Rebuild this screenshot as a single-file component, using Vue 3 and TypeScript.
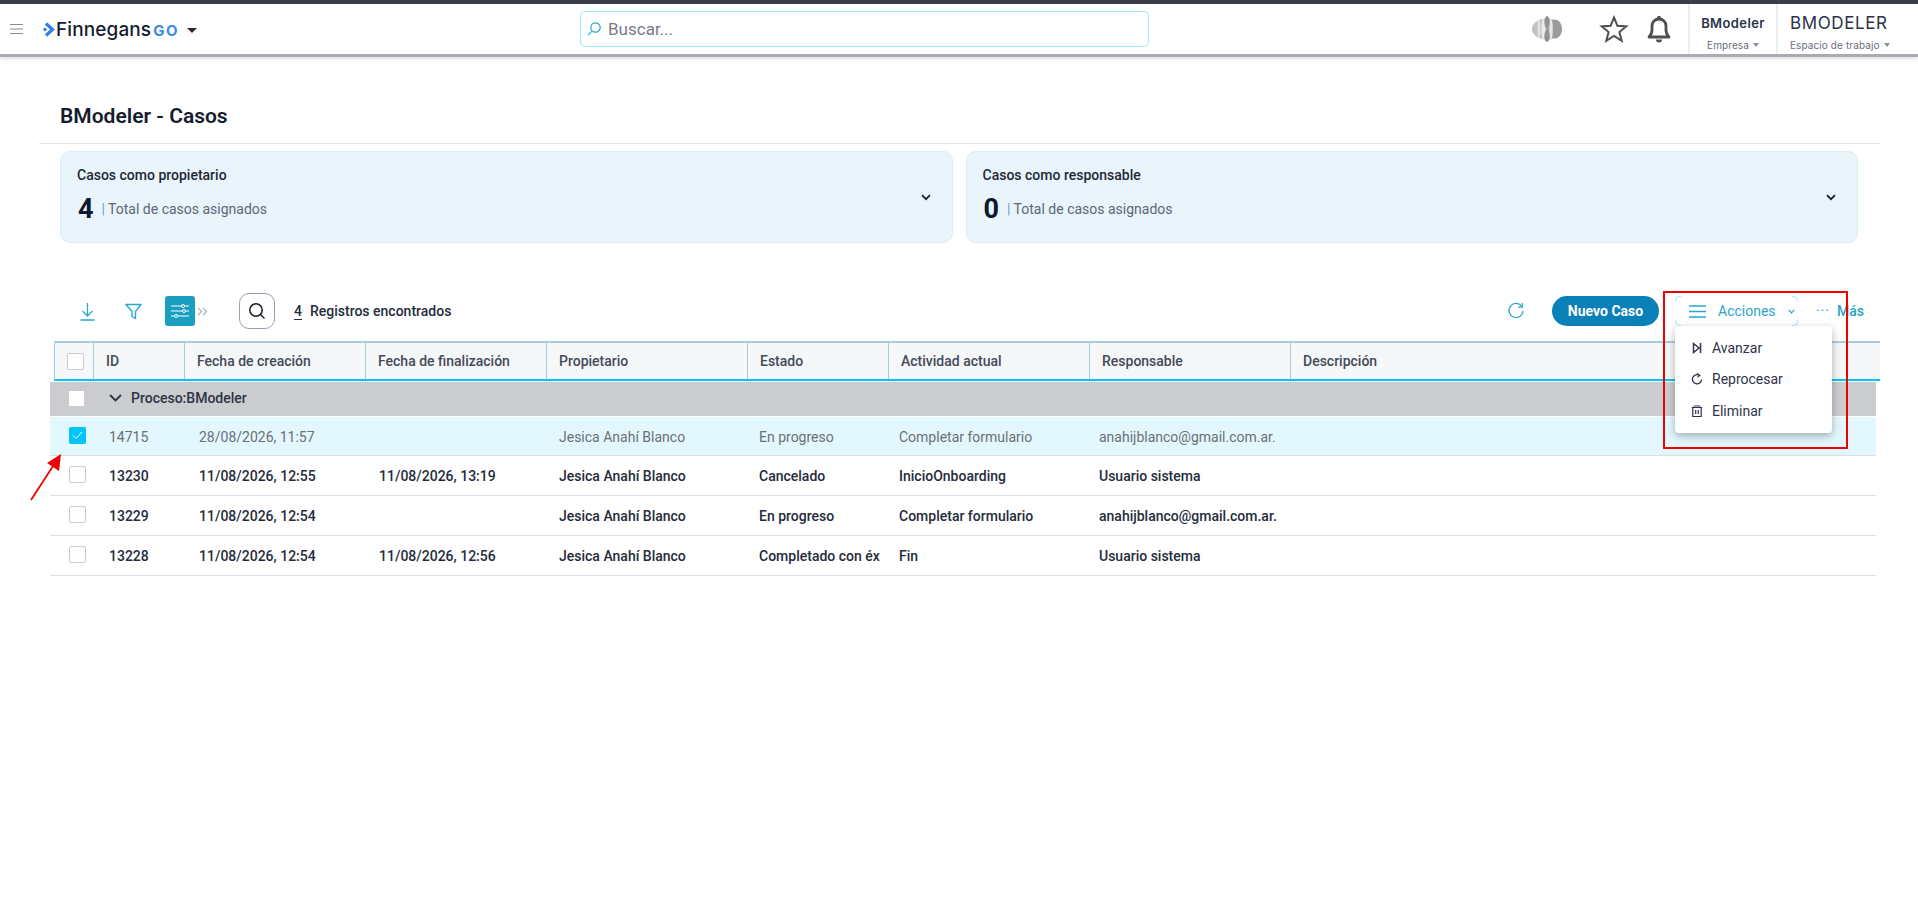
<script setup lang="ts">
interface Caso {
  id: string;
  creacion: string;
  fin: string;
  propietario: string;
  estado: string;
  actividad: string;
  responsable: string;
  selected?: boolean;
}

const columns = [
  'ID',
  'Fecha de creación',
  'Fecha de finalización',
  'Propietario',
  'Estado',
  'Actividad actual',
  'Responsable',
  'Descripción',
];

const casos: Caso[] = [
  { id: '14715', creacion: '28/08/2026, 11:57', fin: '', propietario: 'Jesica Anahí Blanco', estado: 'En progreso', actividad: 'Completar formulario', responsable: 'anahijblanco@gmail.com.ar.', selected: true },
  { id: '13230', creacion: '11/08/2026, 12:55', fin: '11/08/2026, 13:19', propietario: 'Jesica Anahí Blanco', estado: 'Cancelado', actividad: 'InicioOnboarding', responsable: 'Usuario sistema' },
  { id: '13229', creacion: '11/08/2026, 12:54', fin: '', propietario: 'Jesica Anahí Blanco', estado: 'En progreso', actividad: 'Completar formulario', responsable: 'anahijblanco@gmail.com.ar.' },
  { id: '13228', creacion: '11/08/2026, 12:54', fin: '11/08/2026, 12:56', propietario: 'Jesica Anahí Blanco', estado: 'Completado con éxito', actividad: 'Fin', responsable: 'Usuario sistema' },
];

const resumen = [
  { titulo: 'Casos como propietario', total: 4 },
  { titulo: 'Casos como responsable', total: 0 },
];
</script>

<template>
  <div class="page">
    <div class="topstrip"></div>
    <header class="topbar">
      <svg class="burger" width="13" height="10" viewBox="0 0 13 10">
        <path d="M0 .5h13M0 5h13M0 9.500h13" stroke="#8a8a8a" stroke-width="1.200" fill="none" />
      </svg>
      <div class="logo">
        <svg width="12" height="15" viewBox="0 0 12 15">
          <path d="M3 1.500 9.500 7.500 3 13.500" stroke="#2f80ed" stroke-width="3.200" fill="none" />
          <circle cx="2" cy="7.500" r="1.700" fill="#2f80ed" />
        </svg>
        <span class="logo-name">Finnegans</span><span class="logo-go">GO</span>
        <span class="logo-caret"></span>
      </div>
      <div class="search">
        <svg width="16" height="16" viewBox="0 0 16 16">
          <circle cx="9.500" cy="6.500" r="4.700" stroke="#2b9fc4" stroke-width="1.200" fill="none" />
          <path d="M6 10 2 14" stroke="#35c5ee" stroke-width="1.400" />
        </svg>
        <span>Buscar...</span>
      </div>
      <div class="top-right">
        <svg class="brand-mark" width="30" height="26" viewBox="0 0 30 26">
          <ellipse cx="15" cy="13" rx="15" ry="10.500" fill="#c2c2c2" />
          <ellipse cx="23" cy="13" rx="7" ry="9.500" fill="#9a9a9a" />
          <ellipse cx="7" cy="13" rx="1.600" ry="10" fill="#e2e2e2" />
          <ellipse cx="11.500" cy="13" rx="2" ry="10.500" fill="#ececec" />
          <ellipse cx="19" cy="13" rx="1.800" ry="10.500" fill="#e6e6e6" />
          <ellipse cx="15" cy="6" rx="2.600" ry="6" fill="#8f8f8f" />
          <ellipse cx="15" cy="20" rx="2.600" ry="6" fill="#8f8f8f" />
          <rect x="14.200" y="6" width="1.600" height="14" fill="#9a9a9a" />
        </svg>
        <svg class="star" width="30" height="28" viewBox="0 0 30 28">
          <path d="M15 2.500 18.400 10.800 27.300 11.400 20.400 17.100 22.700 25.800 15 21 7.300 25.800 9.600 17.100 2.700 11.400 11.600 10.800Z" stroke="#4f4f4f" stroke-width="2" stroke-linejoin="miter" fill="none" />
        </svg>
        <svg class="bell" width="24" height="28" viewBox="0 0 24 28">
          <path d="M2 22c2-2 3-3.500 3-7V11c0-4 3-7 7-7s7 3 7 7v4c0 3.500 1 5 3 7Z" stroke="#4f4f4f" stroke-width="2.800" stroke-linejoin="round" fill="none" />
          <path d="M9 24.500a3 3 0 0 0 6 0Z" fill="#4f4f4f" />
          <circle cx="12" cy="2.800" r="2" fill="#4f4f4f" />
        </svg>
        <div class="ctx ctx-company">
          <div class="ctx-main strong">BModeler</div>
          <div class="ctx-sub">Empresa <i class="tri"></i></div>
        </div>
        <div class="ctx ctx-space">
          <div class="ctx-main">BMODELER</div>
          <div class="ctx-sub">Espacio de trabajo <i class="tri"></i></div>
        </div>
      </div>
    </header>

    <main class="content">
      <div class="title-row">
        <h1>BModeler - Casos</h1>
      </div>

      <section class="cards">
        <div v-for="card in resumen" :key="card.titulo" class="card">
          <div>
            <div class="card-title">{{ card.titulo }}</div>
            <div class="card-total">
              <strong>{{ card.total }}</strong>
              <span><em>|</em> Total de casos asignados</span>
            </div>
          </div>
          <svg width="10" height="7" viewBox="0 0 10 7">
            <path d="M1 1.200 5 5.200 9 1.200" stroke="#16202e" stroke-width="1.800" fill="none" />
          </svg>
        </div>
      </section>

      <section class="toolbar">
        <svg class="tool-down" width="15" height="19" viewBox="0 0 15 19">
          <path d="M7.500 1v13M2.500 9l5 5 5-5M.5 18h14" stroke="#2aa8cb" stroke-width="1.300" fill="none" />
        </svg>
        <svg class="tool-filter" width="17" height="17" viewBox="0 0 17 17">
          <path d="M1 1.500h15L10.500 8.500v7L7 13.500V8.500Z" stroke="#2aa8cb" stroke-width="1.400" fill="none" stroke-linejoin="round" />
        </svg>
        <span class="tool-active">
          <svg width="18" height="16" viewBox="0 0 18 16">
            <path d="M0 3h18M0 8h18M0 13h18" stroke="#fff" stroke-width="1.200" />
            <circle cx="12" cy="3" r="1.500" fill="#1a9fc0" stroke="#fff" />
            <circle cx="13" cy="8" r="1.500" fill="#1a9fc0" stroke="#fff" />
            <circle cx="5" cy="13" r="1.500" fill="#1a9fc0" stroke="#fff" />
          </svg>
        </span>
        <svg class="tool-more" width="11" height="9" viewBox="0 0 11 9">
          <path d="M1 .8 4.500 4.500 1 8.200M6 .8 9.500 4.500 6 8.200" stroke="#a9adb8" stroke-width="1.200" fill="none" />
        </svg>
        <span class="tool-search">
          <svg width="18" height="18" viewBox="0 0 18 18">
            <circle cx="8" cy="8" r="6.200" stroke="#16202e" stroke-width="1.500" fill="none" />
            <path d="M12.500 12.500 16.500 16.500" stroke="#16202e" stroke-width="1.500" />
          </svg>
        </span>
        <span class="count"><u>4</u>Registros encontrados</span>

        <div class="tool-right">
          <svg class="tool-refresh" width="18" height="18" viewBox="0 0 18 18">
            <path d="M14.800 4.500A7 7 0 1 0 16 9" stroke="#2aa8cb" stroke-width="1.200" fill="none" />
            <path d="M15.300 1v4.200H11" stroke="#2aa8cb" stroke-width="1.200" fill="none" />
          </svg>
          <button class="btn-new">Nuevo Caso</button>
          <div class="actions">
            <i v-for="c in ['tl', 'tr', 'bl', 'br']" :key="c" class="corner" :class="c"></i>
            <svg width="17" height="13" viewBox="0 0 17 13">
              <path d="M0 1h17M0 6.500h17M0 12h17" stroke="#2aa8cb" stroke-width="1.400" />
            </svg>
            <span>Acciones</span>
            <svg width="7" height="5" viewBox="0 0 7 5">
              <path d="M.8 1 3.500 3.800 6.200 1" stroke="#2aa8cb" stroke-width="1.200" fill="none" />
            </svg>
            <div class="menu">
              <div class="menu-item">
                <svg width="12" height="12" viewBox="0 0 12 12">
                  <path d="M2.500 1.500 8 6 2.500 10.500ZM9.500 1v10" stroke="#2f3448" stroke-width="1.500" fill="none" />
                </svg>
                Avanzar
              </div>
              <div class="menu-item">
                <svg width="12" height="12" viewBox="0 0 12 12">
                  <path d="M8.700 2.500A4.600 4.600 0 1 0 10.600 6.500" stroke="#2f3448" stroke-width="1.300" fill="none" />
                  <path d="M6 .4 8.900 2.500 6.300 4.400" stroke="#2f3448" stroke-width="1.100" fill="none" />
                </svg>
                Reprocesar
              </div>
              <div class="menu-item">
                <svg width="12" height="12" viewBox="0 0 12 12">
                  <path d="M.8 2.500h10.400M2.500 1h7M1.800 2.500v9h8.400v-9M4.700 5v4M7.300 5v4" stroke="#2f3448" stroke-width="1.200" fill="none" />
                </svg>
                Eliminar
              </div>
            </div>
          </div>
          <span class="more"><b>···</b>Más</span>
        </div>
      </section>

      <section class="table">
        <div class="thead">
          <div class="th th-check"><i class="box"></i></div>
          <div v-for="col in columns" :key="col" class="th">{{ col }}</div>
        </div>
        <div class="group">
          <i class="box plain"></i>
          <svg width="13" height="8" viewBox="0 0 13 8">
            <path d="M1 1 6.500 6.500 12 1" stroke="#2e3444" stroke-width="1.800" fill="none" />
          </svg>
          <span>Proceso:BModeler</span>
        </div>
        <div v-for="caso in casos" :key="caso.id" class="row" :class="{ selected: caso.selected }">
          <div class="td td-check">
            <i v-if="caso.selected" class="box checked">
              <svg width="11" height="9" viewBox="0 0 11 9">
                <path d="M1 4.500 4 7.500 10 1" stroke="#fff" stroke-width="1" fill="none" />
              </svg>
            </i>
            <i v-else class="box"></i>
          </div>
          <div class="td">{{ caso.id }}</div>
          <div class="td">{{ caso.creacion }}</div>
          <div class="td">{{ caso.fin }}</div>
          <div class="td">{{ caso.propietario }}</div>
          <div class="td">{{ caso.estado }}</div>
          <div class="td">{{ caso.actividad }}</div>
          <div class="td">{{ caso.responsable }}</div>
          <div class="td"></div>
        </div>
      </section>
    </main>

    <!-- anotaciones de la captura -->
    <svg class="mark-arrow" width="36" height="48" viewBox="0 0 36 48">
      <path d="M1 47 25 10" stroke="#f00000" stroke-width="1.800" />
      <path d="M31 1 29 18 17 10Z" fill="#f00000" />
    </svg>
    <div class="mark-box"></div>
  </div>
</template>

<style>
html,
body {
  margin: 0;
  background: #fff;
}
</style>

<style scoped>
.page {
  position: relative;
  width: 1918px;
  height: 910px;
  overflow: hidden;
  background: #fff;
  font-family: Roboto, "Liberation Sans", sans-serif;
  color: #252c3c;
}

.topstrip {
  height: 4px;
  background: #3a3d47;
}

.topbar {
  display: flex;
  align-items: center;
  height: 50px;
  border-bottom: 3px solid #a9aab2;
  box-shadow: 0 2px 4px rgba(0, 0, 0, 0.12);
  box-sizing: content-box;
}

.burger {
  margin-left: 10px;
}

.logo {
  display: flex;
  align-items: center;
  margin-left: 20px;
  width: 165px;
}

.logo-name {
  margin-left: 1px;
  font-family: Inter, sans-serif;
  font-size: 19px;
  font-weight: 500;
  letter-spacing: 0.1px;
  color: #141c2e;
}

.logo-go {
  margin-left: 2px;
  margin-top: 2px;
  font-family: Inter, sans-serif;
  font-size: 15px;
  font-weight: 700;
  letter-spacing: 1.5px;
  color: #3b8ae6;
}

.logo-caret {
  margin-left: 8px;
  margin-top: 3px;
  border-left: 5px solid transparent;
  border-right: 5px solid transparent;
  border-top: 5px solid #2b2b2b;
}

.search {
  display: flex;
  align-items: center;
  gap: 6px;
  margin-left: 372px;
  margin-top: -1px;
  width: 562px;
  height: 34px;
  padding-left: 5px;
  box-sizing: content-box;
  border: 1px solid #9fe6fa;
  border-radius: 5px;
  font-size: 17px;
  color: #777c85;
}

.top-right {
  display: flex;
  align-items: center;
  height: 100%;
  margin-left: auto;
}

.star {
  margin-left: 37px;
}

.bell {
  margin-left: 18px;
}

.ctx {
  display: flex;
  flex-direction: column;
  align-items: center;
  height: 100%;
  box-sizing: border-box;
  border-left: 2px solid #eeeeee;
  font-family: Inter, sans-serif;
}

.ctx-company {
  width: 88px;
  margin-left: 17px;
}

.ctx-space {
  width: 142px;
  align-items: flex-start;
  padding-left: 12px;
}

.ctx-main {
  margin-top: 9px;
  height: 20px;
  line-height: 20px;
  font-size: 17px;
  letter-spacing: 0.6px;
  color: #2a3348;
}

.ctx-main.strong {
  font-size: 13px;
  font-weight: 600;
  letter-spacing: 0.4px;
}

.ctx-sub {
  display: flex;
  align-items: center;
  gap: 4px;
  margin-top: 6px;
  font-size: 10px;
  letter-spacing: 0.1px;
  color: #6a6f7a;
  white-space: nowrap;
}

.tri {
  border-left: 3px solid transparent;
  border-right: 3px solid transparent;
  border-top: 4px solid #8a8f98;
}

.content {
  padding: 0 38px 0 39px;
}

.title-row {
  height: 87px;
  box-sizing: border-box;
  padding-left: 21px;
  padding-top: 47px;
  border-bottom: 1px solid #e4e5e7;
}

h1 {
  margin: 0;
  font-size: 21px;
  line-height: 24px;
  font-weight: 600;
  color: #141c2e;
}

.cards {
  display: flex;
  gap: 13px;
  margin: 7px 22px 0 21px;
}

.card {
  display: flex;
  align-items: center;
  justify-content: space-between;
  flex: 1;
  height: 92px;
  box-sizing: border-box;
  padding: 0 21px 4px 16px;
  background: #e9f5fb;
  border: 1px solid #d9ecf6;
  border-radius: 10px;
}

.card svg {
  margin-top: 4px;
}

.card-title {
  font-size: 14px;
  font-weight: 500;
  line-height: 18px;
  color: #1f2737;
}

.card-total {
  display: flex;
  align-items: center;
  gap: 8px;
  margin-top: 10px;
  height: 30px;
}

.card-total strong {
  margin-left: 1px;
  font-size: 27px;
  font-weight: 700;
  color: #0d1830;
}

.card-total span {
  font-size: 14px;
  color: #5c6674;
}

.card-total em {
  font-style: normal;
  color: #6f9fc0;
}

.toolbar {
  display: flex;
  align-items: center;
  height: 40px;
  margin-top: 48px;
  padding-left: 41px;
}

.tool-filter {
  margin-left: 30px;
}

.tool-active {
  display: flex;
  align-items: center;
  justify-content: center;
  width: 30px;
  height: 30px;
  margin-left: 23px;
  background: #1a9fc0;
  border-radius: 3px;
}

.tool-more {
  margin-left: 2px;
}

.tool-search {
  display: flex;
  align-items: center;
  justify-content: center;
  width: 34px;
  height: 34px;
  margin-left: 31px;
  border: 1px solid #9aa0b0;
  border-radius: 10px;
}

.count {
  margin-left: 19px;
  font-size: 14px;
  font-weight: 500;
  color: #252c3c;
}

.count u {
  margin-right: 8px;
  text-underline-offset: 3px;
}

.tool-right {
  display: flex;
  align-items: center;
  margin-left: auto;
}

.btn-new {
  width: 107px;
  height: 30px;
  margin-left: 27px;
  padding: 0;
  border: none;
  border-radius: 15px;
  background: #0a80b9;
  color: #fff;
  font-family: inherit;
  font-size: 14px;
  font-weight: 700;
}

.actions {
  position: relative;
  display: flex;
  align-items: center;
  gap: 12px;
  width: 123px;
  height: 30px;
  box-sizing: border-box;
  margin-left: 16px;
  padding-left: 14px;
  font-size: 14px;
  color: #2aa8cb;
}

.corner {
  position: absolute;
  width: 5px;
  height: 5px;
  border: 0 solid #a5e6f7;
}

.corner.tl {
  left: 0;
  top: 0;
  border-width: 1px 0 0 1px;
  border-top-left-radius: 5px;
}

.corner.tr {
  right: 0;
  top: 0;
  border-width: 1px 1px 0 0;
  border-top-right-radius: 5px;
}

.corner.bl {
  left: 0;
  bottom: 0;
  border-width: 0 0 1px 1px;
  border-bottom-left-radius: 5px;
}

.corner.br {
  right: 0;
  bottom: 0;
  border-width: 0 1px 1px 0;
  border-bottom-right-radius: 5px;
}

.menu {
  position: absolute;
  z-index: 5;
  top: 30px;
  left: 0;
  width: 157px;
  height: 107px;
  box-sizing: border-box;
  padding-top: 6px;
  background: #fff;
  border-radius: 4px;
  box-shadow: 0 3px 8px rgba(0, 0, 0, 0.3);
  color: #2f3448;
}

.menu-item {
  display: flex;
  align-items: center;
  gap: 9px;
  height: 31.500px;
  padding-left: 16px;
}

.more {
  display: flex;
  align-items: center;
  gap: 7px;
  width: 64px;
  margin-left: 18px;
  font-size: 14px;
  font-weight: 500;
  color: #2aa3c1;
}

.more b {
  font-weight: 400;
  letter-spacing: 1px;
  color: #2aa3c1;
}

.table {
  margin-top: 10px;
}

.thead {
  display: grid;
  grid-template-columns: 39px 91px 181px 181px 201px 141px 201px 201px 1fr;
  height: 40px;
  margin-left: 15px;
  box-sizing: border-box;
  background: #f6f7f9;
  border-top: 2px solid #a9cbe0;
  border-bottom: 2px solid #00c5f5;
  border-left: 1px solid #a9cbe0;
}

.th {
  display: flex;
  align-items: center;
  padding-left: 12px;
  border-right: 1px solid #a9cbe0;
  font-size: 14px;
  font-weight: 500;
  color: #434a5a;
}

.th:last-child {
  border-right: none;
}

.th-check {
  padding-left: 12px;
}

.box {
  display: flex;
  align-items: center;
  justify-content: center;
  width: 17px;
  height: 17px;
  box-sizing: border-box;
  background: #fff;
  border: 1px solid #c9ccd2;
  border-radius: 2px;
}

.box.plain {
  width: 15px;
  height: 15px;
  border: none;
  border-radius: 0;
}

.box.checked {
  background: #00c5f8;
  border: none;
}

.group {
  display: flex;
  align-items: center;
  height: 34px;
  box-sizing: border-box;
  margin: 1px 4px 0 11px;
  padding: 0 0 2px 19px;
  background: #cbccd0;
  font-size: 14px;
  font-weight: 500;
  color: #2e3444;
}

.group svg {
  margin-left: 25px;
  margin-right: 9px;
}

.row {
  display: grid;
  grid-template-columns: 40px 90px 180px 180px 200px 140px 200px 200px 1fr;
  height: 40px;
  margin: 0 4px 0 11px;
  box-sizing: border-box;
  font-size: 14px;
  font-weight: 500;
  color: #252c3c;
}

.group + .row {
  height: 39px;
  margin-top: 1px;
}

.row.selected {
  background: #e3f8fe;
  font-weight: 400;
  color: #6b6f76;
}

.td {
  display: flex;
  align-items: center;
  padding: 1px 0 0 19px;
  box-sizing: border-box;
  overflow: hidden;
  white-space: nowrap;
  border-bottom: 1px solid #dcdee1;
}

.td-check {
  padding: 0 0 2px 19px;
}

.mark-arrow {
  position: absolute;
  left: 30px;
  top: 453px;
}

.mark-box {
  position: absolute;
  left: 1663px;
  top: 291px;
  width: 185px;
  height: 158px;
  box-sizing: border-box;
  border: 2px solid #f00000;
}
</style>
